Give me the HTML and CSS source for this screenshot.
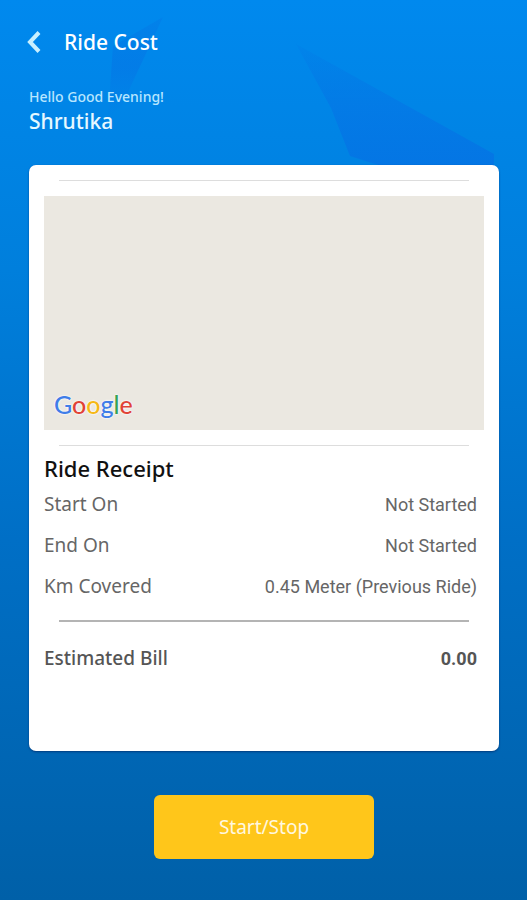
FILE: index.html
```html
<!DOCTYPE html>
<html lang="en">
<head>
  <meta charset="utf-8">
  <meta name="viewport" content="width=device-width, initial-scale=1">
  <title>Ride Cost</title>
  <link rel="stylesheet" href="styles.css">
</head>
<body>
  <div class="screen">
    <svg class="backdrop" viewBox="0 0 527 200" aria-hidden="true">
      <defs>
        <linearGradient id="shard" x1="0" y1="0" x2="0" y2="1">
          <stop offset="0" stop-color="#0478e6" stop-opacity="0.2"/>
          <stop offset="0.5" stop-color="#0478e6" stop-opacity="0.8"/>
          <stop offset="1" stop-color="#0475e4"/>
        </linearGradient>
        <linearGradient id="shard-left" x1="0" y1="0" x2="0" y2="1">
          <stop offset="0" stop-color="#0478e6" stop-opacity="0.4"/>
          <stop offset="0.5" stop-color="#0478e6" stop-opacity="0.7"/>
          <stop offset="1" stop-color="#0478e6" stop-opacity="0"/>
        </linearGradient>
      </defs>
      <path fill="url(#shard)" d="M296 44 L494 154 L494 172 L400 172 L350 156 L331 108 Z"/>
      <path fill="url(#shard-left)" d="M163 17 L113 46 L108 118 L122 105 Z"/>
    </svg>

    <header class="top-bar">
      <button class="back-button" type="button" aria-label="Back">
        <svg width="14" height="22" viewBox="0 0 14 22" aria-hidden="true">
          <path d="M12 1.500 L3 11 L12 20.500" fill="none" stroke="currentColor" stroke-width="4"/>
        </svg>
      </button>
      <h1 class="title">Ride Cost</h1>
    </header>

    <div class="greeting">
      <p class="greeting-text">Hello Good Evening!</p>
      <p class="greeting-name">Shrutika</p>
    </div>

    <main class="card">
      <hr class="divider">
      <div class="map">
        <div class="map-logo"><span class="blue">G</span><span class="red">o</span><span class="yellow">o</span><span class="blue">g</span><span class="green">l</span><span class="red">e</span></div>
      </div>
      <hr class="divider">

      <h2 class="receipt-title">Ride Receipt</h2>
      <dl class="receipt">
        <div class="row">
          <dt>Start On</dt>
          <dd>Not Started</dd>
        </div>
        <div class="row">
          <dt>End On</dt>
          <dd>Not Started</dd>
        </div>
        <div class="row">
          <dt>Km Covered</dt>
          <dd>0.45 Meter (Previous Ride)</dd>
        </div>
      </dl>
      <hr class="divider divider-dark">
      <dl class="receipt">
        <div class="row row-total">
          <dt>Estimated Bill</dt>
          <dd>0.00</dd>
        </div>
      </dl>
    </main>

    <button class="start-button" type="button">Start/Stop</button>
  </div>
</body>
</html>
```

FILE: styles.css
```css
* {
  box-sizing: border-box;
}

body {
  margin: 0;
  font-family: "Noto Sans", sans-serif;
}

h1, h2, p, dl, dd {
  margin: 0;
}

.screen {
  position: relative;
  display: flex;
  flex-direction: column;
  min-height: 100vh;
  padding: 26px 28px 40px 29px;
  background: linear-gradient(#0089ee, #007fdc 30%, #006fc6 60%, #0060a8);
  color: #fff;
}

/* faint shards behind the header */
.backdrop {
  position: absolute;
  top: 0;
  left: 0;
  width: 100%;
}

.top-bar,
.greeting,
.card,
.start-button {
  position: relative;
}

.top-bar {
  display: flex;
  align-items: center;
  gap: 23px;
}

.back-button {
  display: flex;
  margin-left: -2px;
  padding: 0;
  border: 0;
  background: none;
  color: #c8f0ff;
  cursor: pointer;
}

.title {
  font-size: 21px;
  line-height: 32px;
  font-weight: 500;
}

.greeting {
  margin-top: 30px;
}

.greeting-text {
  font-size: 14px;
  line-height: 18px;
  font-weight: 500;
  color: #b8e6ff;
}

.greeting-name {
  font-size: 21px;
  line-height: 30px;
  font-weight: 500;
  color: #e6f8ff;
}

.card {
  min-height: 586px;
  margin-top: 29px;
  padding: 15px;
  border-radius: 7px;
  background: #fff;
  box-shadow: 0 1px 2px rgba(0, 30, 90, 0.6);
  color: #666;
}

.divider {
  height: 1px;
  margin: 0 15px;
  border: 0;
  background: #ddd;
}

.divider-dark {
  height: 2px;
  margin-top: 13px;
  margin-bottom: 16px;
  background: #b4b4b4;
}

.map {
  display: flex;
  align-items: flex-end;
  height: 234px;
  margin: 15px 0;
  padding: 10px;
  background: #ebe8e1;
}

.map-logo {
  font-family: Lato, sans-serif;
  font-size: 25px;
  line-height: 32px;
  font-weight: 500;
  text-shadow: 0 0 2px #fff, 0 0 2px #fff;
}

.blue { color: #3f7de8; }
.red { color: #e04336; }
.yellow { color: #f5b816; }
.green { color: #35a253; }

.receipt-title {
  margin-top: 6px;
  font-size: 22px;
  line-height: 32px;
  font-weight: 500;
  color: #111;
}

.row {
  display: flex;
  justify-content: space-between;
  align-items: center;
  padding-right: 7px;
  font-size: 19px;
  line-height: 41px;
}

.row dd {
  font-family: Roboto, sans-serif;
  font-size: 18px;
}

.row-total {
  font-weight: 500;
  color: #555;
}

.row-total dd {
  font-weight: 700;
}

.start-button {
  align-self: center;
  width: 220px;
  height: 64px;
  margin-top: 44px;
  border: 0;
  border-radius: 6px;
  background: #ffc61a;
  color: #fff8e0;
  font-family: inherit;
  font-size: 19px;
  cursor: pointer;
}
```
